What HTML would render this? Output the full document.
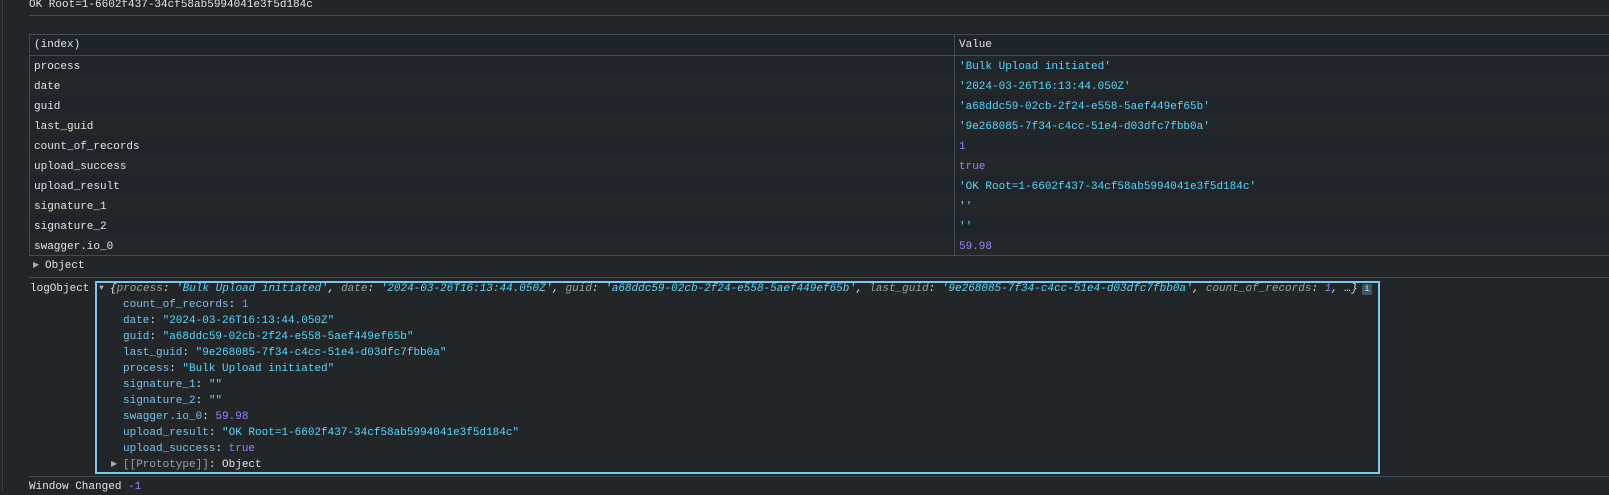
<!DOCTYPE html>
<html><head><style>
body{margin:0;width:1609px;height:490px;background:#232629;overflow:hidden;font-family:"Liberation Mono",monospace;font-size:11px;color:#e3e3e3;position:relative}
.a{position:absolute;white-space:pre;line-height:16px}
.s{color:#5cd5fb}.n{color:#9980ff}.k{color:#7cc0ea}.g{color:#9aa0a6}.i{font-style:italic}
.hr{position:absolute;left:29px;right:0;height:1px;background:#3e4c55}
.r{position:absolute;left:30px;right:0;height:20px}
.c{position:absolute;white-space:pre;line-height:20px;top:1px}
.ar{position:absolute;font-size:8px;color:#aaa;line-height:16px}
</style></head><body>
<div style="position:absolute;left:2px;top:0;width:1px;height:490px;background:#3c4043"></div>
<div class="a" style="left:29px;top:-3px">OK Root=1-6602f437-34cf58ab5994041e3f5d184c</div>
<div class="hr" style="top:15px"></div>

<div class="r" style="top:35px;background:#1e242a"></div>
<div class="r" style="top:55px;background:#1f252b"></div>
<div class="r" style="top:75px;background:#232729"></div>
<div class="r" style="top:95px;background:#1f252b"></div>
<div class="r" style="top:115px;background:#232729"></div>
<div class="r" style="top:135px;background:#1f252b"></div>
<div class="r" style="top:155px;background:#232729"></div>
<div class="r" style="top:175px;background:#1f252b"></div>
<div class="r" style="top:195px;background:#232729"></div>
<div class="r" style="top:215px;background:#1f252b"></div>
<div class="r" style="top:235px;background:#232729"></div>
<div class="hr" style="top:34px"></div>
<div class="hr" style="top:55px"></div>
<div class="hr" style="top:255px"></div>
<div style="position:absolute;left:29px;top:34px;width:1px;height:222px;background:#3e4c55"></div>
<div style="position:absolute;left:954px;top:34px;width:1px;height:222px;background:#3e4c55"></div>

<div class="c" style="left:34px;top:35px">(index)</div>
<div class="c" style="left:959px;top:35px">Value</div>
<div class="c" style="left:34px;top:57px">process
date
guid
last_guid
count_of_records
upload_success
upload_result
signature_1
signature_2
swagger.io_0</div>
<div class="c" style="left:959px;top:57px"><span class="s">'Bulk Upload initiated'</span>
<span class="s">'2024-03-26T16:13:44.050Z'</span>
<span class="s">'a68ddc59-02cb-2f24-e558-5aef449ef65b'</span>
<span class="s">'9e268085-7f34-c4cc-51e4-d03dfc7fbb0a'</span>
<span class="n">1</span>
<span class="n">true</span>
<span class="s">'OK Root=1-6602f437-34cf58ab5994041e3f5d184c'</span>
<span class="s">''</span>
<span class="s">''</span>
<span class="n">59.98</span></div>

<div class="ar" style="left:33px;top:258px">▶</div>
<div class="a" style="left:45px;top:258px">Object</div>
<div class="hr" style="top:277px"></div>
<div class="a" style="left:30px;top:281px">logObject</div>
<div style="position:absolute;left:95px;top:281px;width:1281px;height:189px;border:2px solid #7cc8ec"></div>
<div class="ar" style="left:99px;top:281px">▼</div>
<div class="a" style="left:110px;top:281px"><span class="i">{<span class="g">process</span>: <span class="s">'Bulk Upload initiated'</span>, <span class="g">date</span>: <span class="s">'2024-03-26T16:13:44.050Z'</span>, <span class="g">guid</span>: <span class="s">'a68ddc59-02cb-2f24-e558-5aef449ef65b'</span>, <span class="g">last_guid</span>: <span class="s">'9e268085-7f34-c4cc-51e4-d03dfc7fbb0a'</span>, <span class="g">count_of_records</span>: <span class="n">1</span>, …}</span></div>
<div style="position:absolute;left:1362px;top:284px;width:10px;height:11px;background:#3f5566;border-radius:2px;color:#cde;font-size:9px;line-height:11px;text-align:center">i</div>
<div class="a" style="left:123px;top:297px"><span class="k">count_of_records</span>: <span class="n">1</span>
<span class="k">date</span>: <span class="s">"2024-03-26T16:13:44.050Z"</span>
<span class="k">guid</span>: <span class="s">"a68ddc59-02cb-2f24-e558-5aef449ef65b"</span>
<span class="k">last_guid</span>: <span class="s">"9e268085-7f34-c4cc-51e4-d03dfc7fbb0a"</span>
<span class="k">process</span>: <span class="s">"Bulk Upload initiated"</span>
<span class="k">signature_1</span>: <span class="s">""</span>
<span class="k">signature_2</span>: <span class="s">""</span>
<span class="k">swagger.io_0</span>: <span class="n">59.98</span>
<span class="k">upload_result</span>: <span class="s">"OK Root=1-6602f437-34cf58ab5994041e3f5d184c"</span>
<span class="k">upload_success</span>: <span class="n">true</span></div>
<div class="ar" style="left:111px;top:457px">▶</div>
<div class="a" style="left:123px;top:457px"><span class="g">[[Prototype]]</span>: Object</div>
<div class="hr" style="top:476px"></div>
<div class="a" style="left:29px;top:479px">Window Changed <span class="n">-1</span></div>
</body></html>
